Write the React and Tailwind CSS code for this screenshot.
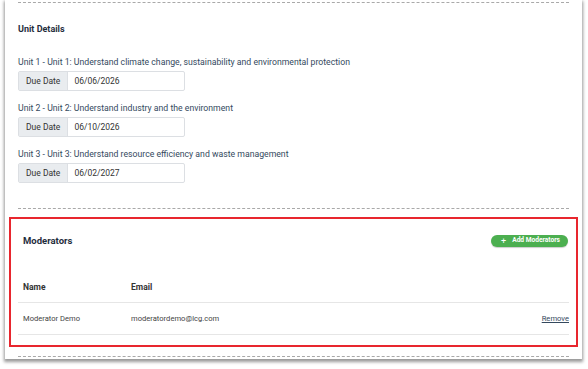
import React from 'react';

const units = [
    { label: "Unit 1 - Unit 1: Understand climate change, sustainability and environmental protection", due: "06/06/2026" },
    { label: "Unit 2 - Unit 2: Understand industry and the environment", due: "06/10/2026" },
    { label: "Unit 3 - Unit 3: Understand resource efficiency and waste management", due: "06/02/2027" },
];

const DueDate = ({ value }) => (
    <div className="flex h-[20px] w-[167px] border border-[#dcdfe3] rounded-[2px] bg-white">
        <span className="flex items-center px-[7px] bg-[#e9ecef] border-r border-[#dcdfe3] text-[8.5px] text-[#333]">Due Date</span>
        <span className="flex items-center pl-[6px] text-[8.5px] text-[#333]">{value}</span>
    </div>
);

const App = () => {
    return (
        <div className="w-[588px] h-[369px] bg-white overflow-hidden" style={{ fontFamily: 'Roboto, "Liberation Sans", sans-serif' }}>
            <div className="ml-[5px] w-[577px] bg-white shadow-[0_2px_3px_1px_rgba(0,0,0,0.4)] pt-[2px] pb-[2px]">
                <div className="mx-[13px] border-t border-dashed border-[#a9a9a9]" />

                <h2 className="ml-[13px] mt-[20px] text-[9px] font-bold text-[#1f2d3d] leading-[12px]">Unit Details</h2>

                <div className="ml-[13px] mt-[21px] flex flex-col gap-[11px]">
                    {units.map(u => (
                        <div key={u.due}>
                            <p className="text-[8.7px] text-[#34495e] leading-[12px] mb-[3px]">{u.label}</p>
                            <DueDate value={u.due} />
                        </div>
                    ))}
                </div>

                <div className="mx-[13px] mt-[25px] border-t border-dashed border-[#a9a9a9]" />

                <div className="mx-[4px] mt-[8px] h-[130px] border-2 border-[#e8262e] px-[7px]">
                    <div className="flex items-center justify-between h-[44px] pl-[5px] pr-[1px]">
                        <h3 className="text-[9.5px] font-bold text-[#1f2d3d]">Moderators</h3>
                        <button className="flex items-center gap-[6px] h-[12px] pl-[10px] pr-[8px] rounded-full bg-[#4caf50] text-white text-[6.6px] font-bold shadow-[0_1px_1px_rgba(0,0,0,0.2)]">
                            <span className="text-[9px] font-normal leading-none">+</span>
                            <span>Add Moderators</span>
                        </button>
                    </div>
                    <div className="flex items-center h-[40px] pt-[9px] pl-[5px] border-b border-[#e6e6e6] text-[8.5px] font-bold text-[#333]">
                        <span className="w-[108px]">Name</span>
                        <span>Email</span>
                    </div>
                    <div className="flex items-center h-[32px] pl-[5px] border-b border-[#e6e6e6] text-[7.6px] text-[#444]">
                        <span className="w-[108px]">Moderator Demo</span>
                        <span className="flex-1">moderatordemo@lcg.com</span>
                        <a className="underline text-[#34495e]">Remove</a>
                    </div>
                </div>

                <div className="mx-[13px] mt-[9px] border-t border-dashed border-[#a9a9a9]" />
            </div>
        </div>
    );
};

export default App;
